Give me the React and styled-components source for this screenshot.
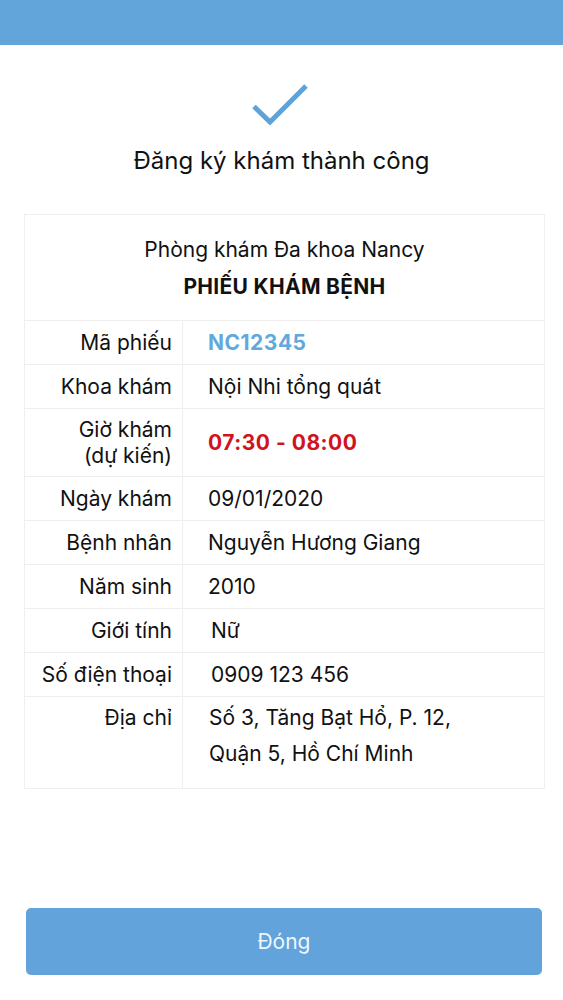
import React from "react";
import styled, { createGlobalStyle } from "styled-components";

const Global = createGlobalStyle`
  html, body { margin: 0; padding: 0; background: #fff; }
  body { font-family: Inter, "Noto Sans", "Liberation Sans", sans-serif; color: #111; }
`;

const Page = styled.div`
  min-height: 1000px;
  display: flex;
  flex-direction: column;
  align-items: stretch;
  box-sizing: border-box;
  padding-bottom: 25px;
`;

const TopBar = styled.div`
  height: 45px;
  background: #62a5db;
`;

const Check = styled.div`
  display: flex;
  justify-content: center;
  margin-top: 38px;
  height: 42px;
`;

const Title = styled.h1`
  margin: 21px 0 0;
  text-align: center;
  font-size: 24px;
  font-weight: 400;
  line-height: 30px;
  color: #111;
`;

const Card = styled.div`
  margin: 38px 18px 0 24px;
  border: 1px solid #efefef;
`;

const CardHead = styled.div`
  padding: 16px 0 15px;
  text-align: center;
  font-size: 21px;
  line-height: 37px;
`;

const Clinic = styled.div`
  font-weight: 400;
`;

const Ticket = styled.div`
  font-weight: 700;
  letter-spacing: 0.3px;
`;

const Row = styled.div`
  display: grid;
  grid-template-columns: 158px 1fr;
  border-top: 1px solid #efefef;
  min-height: ${(p) => p.$h || 43}px;
  font-size: 21px;
`;

const Label = styled.div`
  border-right: 1px solid #efefef;
  padding: ${(p) => (p.$top ? "3px 10px 0 0" : "0 10px 0 0")};
  display: flex;
  flex-direction: column;
  justify-content: ${(p) => (p.$top ? "flex-start" : "center")};
  align-items: flex-end;
  text-align: right;
  white-space: nowrap;
  line-height: ${(p) => p.$lh || 26}px;
`;

const Value = styled.div`
  padding: ${(p) => (p.$top ? "3px 0 16px 26px" : "0 0 0 25px")};
  display: flex;
  flex-direction: column;
  justify-content: ${(p) => (p.$top ? "flex-start" : "center")};
  line-height: ${(p) => p.$lh || 26}px;
  color: ${(p) => p.$color || "#111"};
  font-weight: ${(p) => (p.$bold ? 700 : 400)};
  letter-spacing: ${(p) => (p.$bold ? "0.5px" : "0")};
`;

const Spacer = styled.div`
  flex: 1;
`;

const Button = styled.button`
  margin: 0 21px 0 26px;
  height: 67px;
  border: none;
  border-radius: 5px;
  background: #62a3db;
  color: #eef7fd;
  font-family: inherit;
  font-size: 21px;
  font-weight: 400;
`;

const rows = [
  { label: "Mã phiếu", value: "NC12345", color: "#62a8dc", bold: true },
  { label: "Khoa khám", value: "Nội Nhi tổng quát" },
  { label: ["Giờ khám", "(dự kiến)"], value: "07:30 - 08:00", color: "#d0131c", bold: true, h: 67 },
  { label: "Ngày khám", value: "09/01/2020" },
  { label: "Bệnh nhân", value: "Nguyễn Hương Giang" },
  { label: "Năm sinh", value: "2010" },
  { label: "Giới tính", value: "Nữ", pad: 3 },
  { label: "Số điện thoại", value: "0909 123 456", pad: 3 },
];

export default function App() {
  return (
    <>
      <Global />
      <Page>
        <TopBar />
        <Check>
          <svg width="60" height="42" viewBox="0 0 60 42">
            <polyline
              points="2,23.5 18,39 54,3"
              fill="none"
              stroke="#5fa2d8"
              strokeWidth="5"
            />
          </svg>
        </Check>
        <Title>Đăng ký khám thành công</Title>
        <Card>
          <CardHead>
            <Clinic>Phòng khám Đa khoa Nancy</Clinic>
            <Ticket>PHIẾU KHÁM BỆNH</Ticket>
          </CardHead>
          {rows.map((r, i) => (
            <Row key={i} $h={r.h}>
              <Label>
                {Array.isArray(r.label) ? r.label.map((l) => <span key={l}>{l}</span>) : r.label}
              </Label>
              <Value $color={r.color} $bold={r.bold} style={r.pad ? { paddingLeft: 25 + r.pad } : undefined}>
                {r.value}
              </Value>
            </Row>
          ))}
          <Row $h={90}>
            <Label $top $lh={36}>Địa chỉ</Label>
            <Value $top $lh={36}>
              <span>Số 3, Tăng Bạt Hổ, P. 12,</span>
              <span>Quận 5, Hồ Chí Minh</span>
            </Value>
          </Row>
        </Card>
        <Spacer />
        <Button>Đóng</Button>
      </Page>
    </>
  );
}
